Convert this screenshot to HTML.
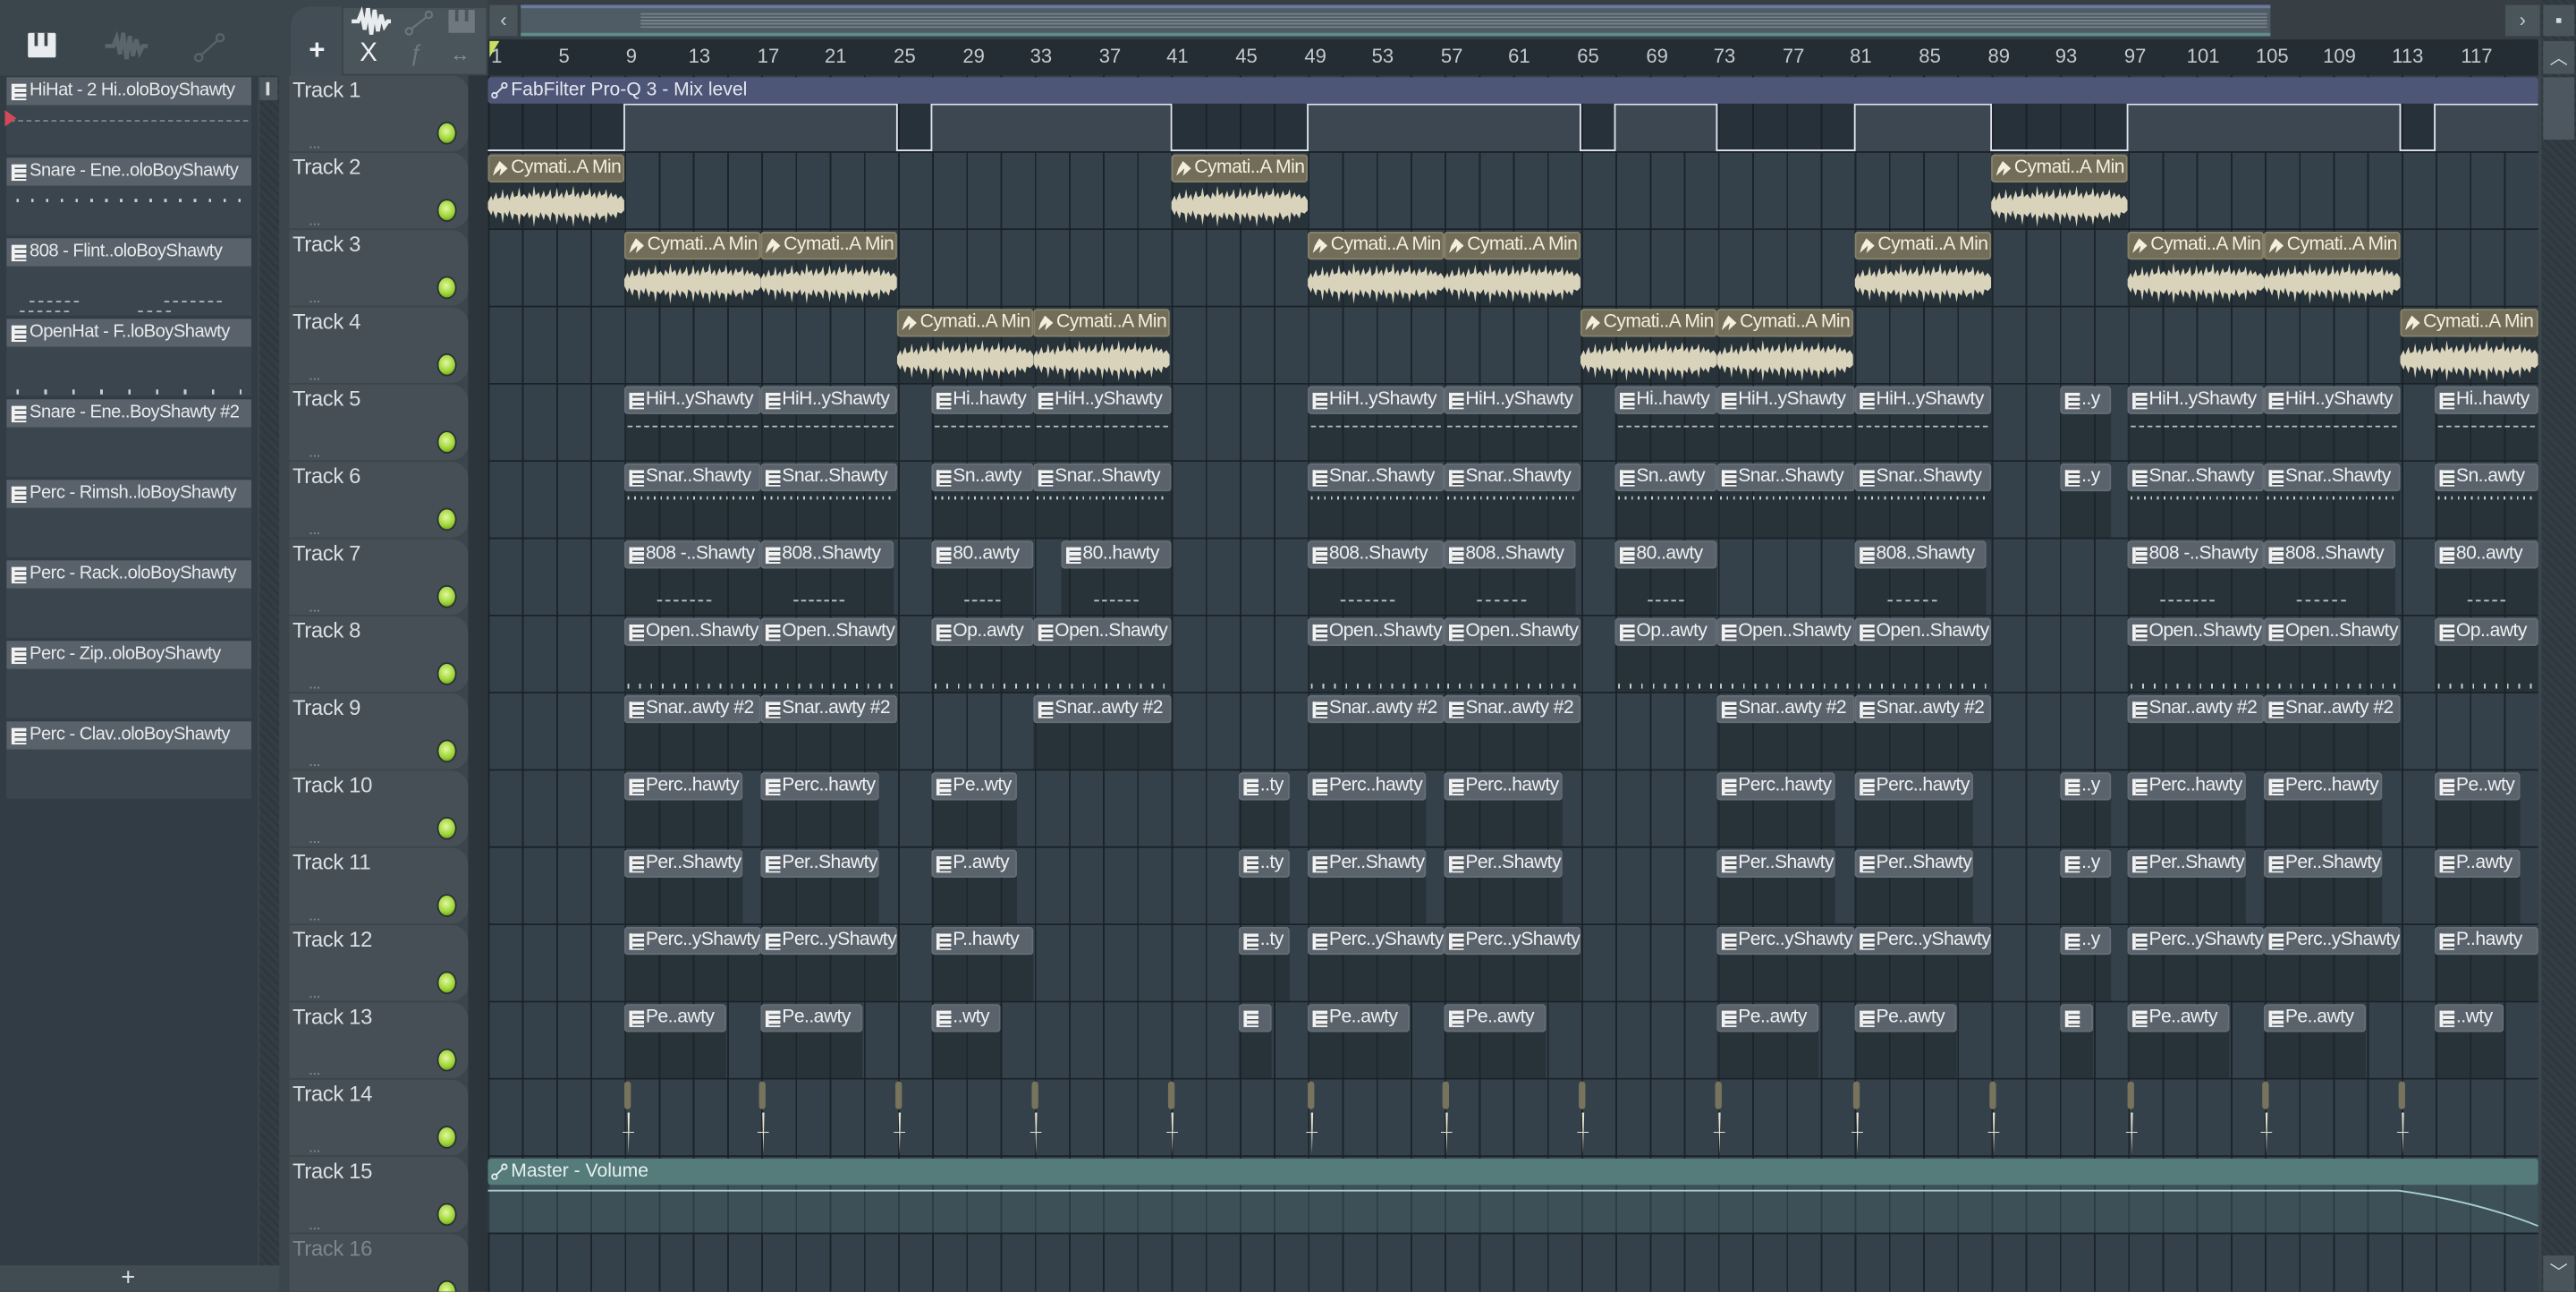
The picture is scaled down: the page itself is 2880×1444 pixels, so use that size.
<!DOCTYPE html>
<html><head><meta charset="utf-8"><style>
*{margin:0;padding:0;box-sizing:border-box}
html,body{width:2880px;height:1444px;overflow:hidden;background:#3b454c}
#s{position:absolute;left:0;top:0;width:1568px;height:786px;transform:scale(1.836735);transform-origin:0 0;font-family:"Liberation Sans",sans-serif;background:#3b454c;overflow:hidden}
.ab{position:absolute}
.lp{position:absolute;left:0;top:46px;width:157px;height:724px;background:#323c44}
.it{position:absolute;left:4px;width:149px;height:47px;background:#3b454d}
.it .l{height:17px;background:#59626a;color:#e6eaed;font-size:11px;line-height:17px;padding-left:14px;white-space:nowrap;overflow:hidden;position:relative;letter-spacing:-.3px}
.it .l::before,.p .h::before{content:"";position:absolute;left:3px;top:4px;width:7px;height:10px;background:repeating-linear-gradient(180deg,#f2f2f2 0 2px,#4a5359 2px 3px);border-left:2px solid #f2f2f2}
.it .b{position:absolute;left:2px;right:2px;top:26px;height:1px;border-top:1px dashed #9aa3a9;opacity:.7}
.th{position:absolute;left:176px;width:109px;height:46px;background:#474f56;border-radius:0 10px 10px 0;color:#d8dee2;font-size:13px;padding:1px 0 0 2px;letter-spacing:-.2px}
.th i{position:absolute;left:91px;top:29px;width:10px;height:12px;border-radius:50%;background:radial-gradient(circle at 45% 40%,#e4f7a0,#97d22e 60%,#4f7a10);box-shadow:0 0 0 1px #2a3036}
.th b{position:absolute;left:12px;top:36px;font-size:9px;color:#8d969c;font-weight:normal}
#grid{position:absolute;left:297px;top:46px;width:1248px;height:740px;background-color:#34414b;background-image:repeating-linear-gradient(90deg,#1c2429 0 1px,transparent 1px 20.8px)}
.row{position:absolute;left:297px;width:1248px;height:47px;box-shadow:inset 0 -1px 0 #1b2227}
.c{position:absolute;top:1px;height:45px;background:rgba(30,38,44,.55)}
.h{position:relative;height:17px;border-radius:2px;font-size:11.5px;line-height:17px;white-space:nowrap;overflow:hidden;letter-spacing:-.3px}
.p .h{background:#5a636b;color:#eef1f3;padding-left:13px;box-shadow:inset 0 0 0 1px #646d75}
.a .h{background:#716d58;color:#f3efdc;padding-left:14px;box-shadow:inset 0 0 0 1px #858169}
.a .h::before{content:"";position:absolute;left:3px;top:4px;width:9px;height:9px;background:#f3efdc;clip-path:polygon(0 0,55% 50%,0 100%,15% 50%,45% 0,100% 50%,45% 100%,55% 50%)}
.a svg{position:absolute;left:0;top:17px;width:100%;height:28px}
.p .d{position:absolute;left:2px;right:2px;height:1px}
.ruler{position:absolute;left:297px;top:24px;width:1248px;height:22px;background:#242d33}
.ruler span{position:absolute;top:3px;font-size:12px;color:#c3cad0}
.m{position:absolute;top:1px;width:4px;height:17px;background:#77735c;border-radius:2px}
</style></head><body><div id="s">
<svg width="0" height="0" style="position:absolute"><defs><symbol id="wf" viewBox="0 0 83 28" preserveAspectRatio="none"><polygon fill="#d9d3bb" points="0,12 2,8 3,11 5,6 6,10 8,9 9,4 10,10 12,7 13,11 15,5 16,9 18,8 19,3 20,9 22,7 24,10 25,6 27,9 28,2 29,8 31,6 32,10 34,5 35,9 37,7 38,4 39,10 41,8 42,3 43,9 45,6 46,10 48,4 49,8 51,7 52,2 53,9 55,6 56,10 58,5 59,8 61,7 62,3 63,9 65,6 66,10 68,5 69,8 71,7 72,4 73,10 75,6 76,9 78,7 79,10 81,8 83,11 83,17 81,19 79,18 78,22 76,19 75,21 73,18 72,25 71,20 69,21 68,23 66,18 65,22 63,20 62,26 61,21 59,20 58,24 56,18 55,22 53,19 52,27 51,21 49,20 48,24 46,18 45,22 43,19 42,26 41,20 39,18 38,24 37,21 35,19 34,23 32,18 31,22 29,20 28,27 27,19 25,22 24,18 22,21 20,19 19,26 18,20 16,19 15,23 13,17 12,21 10,18 9,25 8,19 6,18 5,22 3,17 2,20 0,16"/></symbol>
<symbol id="sp" viewBox="0 0 8 45"><path d="M3,19 L3.6,44 L4.3,19 Z" fill="#e8e4d0"/><path d="M0,31 H7" stroke="#e8e4d0" stroke-width=".6"/></symbol></defs></svg>

<div class="ab" style="left:0;top:0;width:176px;height:46px;background:#3b454c"></div>
<div class="ab" style="left:17px;top:20px;width:17px;height:15px;background:#e8ecee;border-radius:1px"><div class="ab" style="left:4px;top:0;width:2px;height:8px;background:#3b454c"></div><div class="ab" style="left:10px;top:0;width:2px;height:8px;background:#3b454c"></div></div>
<svg class="ab" style="left:64px;top:18px" width="26" height="20" viewBox="0 0 26 20"><path d="M0,10 H5 L7,5 L9,15 L11,2 L13,18 L15,4 L17,16 L19,6 L21,14 L23,10 H26" stroke="#5a646b" stroke-width="2.5" fill="none"/></svg>
<svg class="ab" style="left:118px;top:20px" width="20" height="18"><circle cx="3" cy="15" r="2.2" stroke="#58626a" fill="none" stroke-width="1.3"/><circle cx="16" cy="3" r="2.2" stroke="#58626a" fill="none" stroke-width="1.3"/><path d="M5,13 L14,5" stroke="#58626a" stroke-width="1.3"/></svg>

<div class="lp"></div>
<div class="ab" style="left:158px;top:46px;width:12px;height:724px;background:repeating-linear-gradient(45deg,#2f383f 0 2px,#343d44 2px 4px)"></div>
<div class="ab" style="left:158px;top:47px;width:11px;height:14px;background:#4b545b"><div class="ab" style="left:4px;top:3px;width:2px;height:8px;background:#d5dadd"></div></div>
<div class="it" style="top:47px"><div class="l">HiHat - 2 Hi..oloBoyShawty</div><div class="b"></div><div class="ab" style="left:-1px;top:20px;width:0;height:0;border-top:5px solid transparent;border-bottom:5px solid transparent;border-left:7px solid #d24a5a"></div></div>
<div class="it" style="top:96px"><div class="l">Snare - Ene..oloBoyShawty</div><div class="ab" style="left:6px;right:6px;top:25px;height:2px;background:repeating-linear-gradient(90deg,#c8ced2 0 1.5px,transparent 1.5px 9px)"></div></div>
<div class="it" style="top:145px"><div class="l">808 - Flint..oloBoyShawty</div><div class="ab" style="left:14px;top:38px;width:30px;border-top:1px dashed #aab1b6"></div><div class="ab" style="left:96px;top:38px;width:35px;border-top:1px dashed #aab1b6"></div><div class="ab" style="left:8px;top:44px;width:30px;border-top:1px dashed #aab1b6"></div><div class="ab" style="left:80px;top:44px;width:20px;border-top:1px dashed #aab1b6"></div></div>
<div class="it" style="top:194px"><div class="l">OpenHat - F..loBoyShawty</div><div class="ab" style="left:6px;right:6px;top:43px;height:3px;background:repeating-linear-gradient(90deg,#c8ced2 0 1.5px,transparent 1.5px 17px)"></div></div>
<div class="it" style="top:243px"><div class="l">Snare - Ene..BoyShawty #2</div></div>
<div class="it" style="top:292px"><div class="l">Perc - Rimsh..loBoyShawty</div></div>
<div class="it" style="top:341px"><div class="l">Perc - Rack..oloBoyShawty</div></div>
<div class="it" style="top:390px"><div class="l">Perc - Zip..oloBoyShawty</div></div>
<div class="it" style="top:439px"><div class="l">Perc - Clav..oloBoyShawty</div></div>
<div class="ab" style="left:0;top:770px;width:176px;height:16px;background:#414b52;color:#d8dde0;font-size:15px;line-height:16px;text-align:center;padding-right:20px">+</div>
<div class="ab" style="left:170px;top:46px;width:6px;height:740px;background:#3b454c"></div>

<div class="ab" style="left:177px;top:4px;width:120px;height:42px;background:#434d55;border-radius:12px 0 0 0"></div>
<div class="ab" style="left:208px;top:4px;width:89px;height:42px;background:#4a545b;box-shadow:inset 0 0 0 1px #3a4349"></div>
<div class="ab" style="left:188px;top:21px;color:#eef1f3;font-size:17px;font-weight:bold">+</div>
<svg class="ab" style="left:214px;top:4px" width="24" height="18"><path d="M0,9 H4 L6,4 L8,14 L10,1 L12,17 L14,2 L16,15 L18,5 L20,12 L22,9 H24" stroke="#e8ecee" stroke-width="2.4" fill="none"/></svg>
<svg class="ab" style="left:246px;top:6px" width="18" height="16"><circle cx="3" cy="13" r="2" stroke="#6a747b" fill="none" stroke-width="1.2"/><circle cx="15" cy="3" r="2" stroke="#6a747b" fill="none" stroke-width="1.2"/><path d="M4.5,11.5 L13.5,4.5" stroke="#6a747b" stroke-width="1.2"/></svg>
<div class="ab" style="left:273px;top:6px;width:16px;height:14px;background:#6f787e"><div class="ab" style="left:4px;top:0;width:2px;height:7px;background:#4a545b"></div><div class="ab" style="left:10px;top:0;width:2px;height:7px;background:#4a545b"></div></div>
<div class="ab" style="left:219px;top:24px;color:#eef1f3;font-size:16px">X</div>
<div class="ab" style="left:249px;top:24px;color:#6f787e;font-size:14px;font-style:italic">ƒ</div>
<div class="ab" style="left:274px;top:26px;color:#8a9399;font-size:12px">↔</div>

<div class="ab" style="left:297px;top:0;width:1271px;height:24px;background:#373f45"></div>
<div class="ab" style="left:298px;top:3px;width:17px;height:19px;background:#4a545b;color:#c7cdd1;font-size:12px;text-align:center;line-height:19px">‹</div>
<div class="ab" style="left:317px;top:3px;width:1065px;height:19px;background:#505c65;border-top:2px solid #6c7aa0;border-bottom:2px solid #5f8c8c"></div>
<div class="ab" style="left:390px;top:8px;width:990px;height:9px;background:repeating-linear-gradient(180deg,#8f9aa2 0 1px,transparent 1px 2px);opacity:.6"></div>
<div class="ab" style="left:1525px;top:3px;width:21px;height:19px;background:#4a545b;color:#c7cdd1;font-size:12px;text-align:center;line-height:19px">›</div>

<div class="ab" style="left:1547px;top:0;width:21px;height:786px;background:repeating-linear-gradient(45deg,#2f383f 0 2px,#343d44 2px 4px)"></div>
<div class="ab" style="left:1548px;top:3px;width:19px;height:19px;background:#4a545b"><div class="ab" style="left:8px;top:8px;width:3px;height:3px;background:#d5dadd"></div></div>
<div class="ab" style="left:1548px;top:25px;width:19px;height:20px;background:#4a545b;color:#cfd4d8;font-size:11px;text-align:center;line-height:22px">︿</div>
<div class="ab" style="left:1548px;top:47px;width:19px;height:38px;background:#4d575f"></div>
<div class="ab" style="left:1548px;top:764px;width:19px;height:22px;background:#4a545b;color:#cfd4d8;font-size:11px;text-align:center;line-height:22px">﹀</div>

<div class="ruler">
<div class="ab" style="left:1px;top:1px;width:0;height:0;border-left:6px solid #c8e060;border-bottom:10px solid transparent"></div>
<span style="left:2px">1</span><span style="left:43px">5</span><span style="left:84px">9</span><span style="left:122px">13</span><span style="left:164px">17</span><span style="left:205px">21</span><span style="left:247px">25</span><span style="left:289px">29</span><span style="left:330px">33</span><span style="left:372px">37</span><span style="left:413px">41</span><span style="left:455px">45</span><span style="left:497px">49</span><span style="left:538px">53</span><span style="left:580px">57</span><span style="left:621px">61</span><span style="left:663px">65</span><span style="left:705px">69</span><span style="left:746px">73</span><span style="left:788px">77</span><span style="left:829px">81</span><span style="left:871px">85</span><span style="left:913px">89</span><span style="left:954px">93</span><span style="left:996px">97</span><span style="left:1034px">101</span><span style="left:1076px">105</span><span style="left:1117px">109</span><span style="left:1159px">113</span><span style="left:1201px">117</span>
</div>

<div class="ab" style="left:285px;top:46px;width:12px;height:740px;background:#2c353b"></div>
<div class="th" style="top:46px">Track 1<i></i><b>...</b></div>
<div class="th" style="top:93px">Track 2<i></i><b>...</b></div>
<div class="th" style="top:140px">Track 3<i></i><b>...</b></div>
<div class="th" style="top:187px">Track 4<i></i><b>...</b></div>
<div class="th" style="top:234px">Track 5<i></i><b>...</b></div>
<div class="th" style="top:281px">Track 6<i></i><b>...</b></div>
<div class="th" style="top:328px">Track 7<i></i><b>...</b></div>
<div class="th" style="top:375px">Track 8<i></i><b>...</b></div>
<div class="th" style="top:422px">Track 9<i></i><b>...</b></div>
<div class="th" style="top:469px">Track 10<i></i><b>...</b></div>
<div class="th" style="top:516px">Track 11<i></i><b>...</b></div>
<div class="th" style="top:563px">Track 12<i></i><b>...</b></div>
<div class="th" style="top:610px">Track 13<i></i><b>...</b></div>
<div class="th" style="top:657px">Track 14<i></i><b>...</b></div>
<div class="th" style="top:704px">Track 15<i></i><b>...</b></div>
<div class="th" style="top:751px;color:#7d868c">Track 16<i></i></div>

<div id="grid"></div>

<div class="row" style="top:46px">
<div class="ab" style="left:0;top:17px;width:1248px;height:29px;background:rgba(25,32,38,.45)"></div>
<svg class="ab" style="left:0;top:0" width="1248" height="47"><path d="M83,46 V18 H249 V46 Z M270,46 V18 H416 V46 Z M499,46 V18 H665 V46 Z M686,46 V18 H748 V46 Z M832,46 V18 H915 V46 Z M998,46 V18 H1164 V46 Z M1185,46 V18 H1248 V46 Z" fill="#3d4752"/><path d="M0,45.5 H83 V17.5 H249 V45.5 H270 V17.5 H416 V45.5 H499 V17.5 H665 V45.5 H686 V17.5 H748 V45.5 H832 V17.5 H915 V45.5 H998 V17.5 H1164 V45.5 H1185 V17.5 H1248" stroke="#dfe4f0" stroke-width="1" fill="none"/></svg>
<div class="ab" style="left:0;top:1px;width:1248px;height:16px;background:#4e5677;border-radius:2px;color:#e4e7f0;font-size:11.5px;line-height:16px;padding-left:14px">FabFilter Pro-Q 3 - Mix level</div>
<svg class="ab" style="left:2px;top:4px" width="10" height="10"><circle cx="2" cy="8" r="1.5" stroke="#e4e7f0" fill="none"/><circle cx="8" cy="2" r="1.5" stroke="#e4e7f0" fill="none"/><path d="M3,7 L7,3" stroke="#e4e7f0"/></svg>
</div>

<div class="row" style="top:93px">
<div class="c a" style="left:0;width:83px"><div class="h">Cymati..A Min</div><svg><use href="#wf"/></svg></div>
<div class="c a" style="left:416px;width:83px"><div class="h">Cymati..A Min</div><svg><use href="#wf"/></svg></div>
<div class="c a" style="left:915px;width:83px"><div class="h">Cymati..A Min</div><svg><use href="#wf"/></svg></div>
</div>
<div class="row" style="top:140px">
<div class="c a" style="left:83px;width:83px"><div class="h">Cymati..A Min</div><svg><use href="#wf"/></svg></div>
<div class="c a" style="left:166px;width:83px"><div class="h">Cymati..A Min</div><svg><use href="#wf"/></svg></div>
<div class="c a" style="left:499px;width:83px"><div class="h">Cymati..A Min</div><svg><use href="#wf"/></svg></div>
<div class="c a" style="left:582px;width:83px"><div class="h">Cymati..A Min</div><svg><use href="#wf"/></svg></div>
<div class="c a" style="left:832px;width:83px"><div class="h">Cymati..A Min</div><svg><use href="#wf"/></svg></div>
<div class="c a" style="left:998px;width:83px"><div class="h">Cymati..A Min</div><svg><use href="#wf"/></svg></div>
<div class="c a" style="left:1081px;width:83px"><div class="h">Cymati..A Min</div><svg><use href="#wf"/></svg></div>
</div>
<div class="row" style="top:187px">
<div class="c a" style="left:249px;width:83px"><div class="h">Cymati..A Min</div><svg><use href="#wf"/></svg></div>
<div class="c a" style="left:332px;width:83px"><div class="h">Cymati..A Min</div><svg><use href="#wf"/></svg></div>
<div class="c a" style="left:665px;width:83px"><div class="h">Cymati..A Min</div><svg><use href="#wf"/></svg></div>
<div class="c a" style="left:748px;width:83px"><div class="h">Cymati..A Min</div><svg><use href="#wf"/></svg></div>
<div class="c a" style="left:1164px;width:84px"><div class="h">Cymati..A Min</div><svg><use href="#wf"/></svg></div>
</div>
<div class="row" style="top:234px">
<div class="c p" style="left:83px;width:83px"><div class="h">HiH..yShawty</div><div class="d" style="top:24px;border-top:1px dashed #b8bfc4"></div></div>
<div class="c p" style="left:166px;width:83px"><div class="h">HiH..yShawty</div><div class="d" style="top:24px;border-top:1px dashed #b8bfc4"></div></div>
<div class="c p" style="left:270px;width:62px"><div class="h">Hi..hawty</div><div class="d" style="top:24px;border-top:1px dashed #b8bfc4"></div></div>
<div class="c p" style="left:332px;width:84px"><div class="h">HiH..yShawty</div><div class="d" style="top:24px;border-top:1px dashed #b8bfc4"></div></div>
<div class="c p" style="left:499px;width:83px"><div class="h">HiH..yShawty</div><div class="d" style="top:24px;border-top:1px dashed #b8bfc4"></div></div>
<div class="c p" style="left:582px;width:83px"><div class="h">HiH..yShawty</div><div class="d" style="top:24px;border-top:1px dashed #b8bfc4"></div></div>
<div class="c p" style="left:686px;width:62px"><div class="h">Hi..hawty</div><div class="d" style="top:24px;border-top:1px dashed #b8bfc4"></div></div>
<div class="c p" style="left:748px;width:84px"><div class="h">HiH..yShawty</div><div class="d" style="top:24px;border-top:1px dashed #b8bfc4"></div></div>
<div class="c p" style="left:832px;width:83px"><div class="h">HiH..yShawty</div><div class="d" style="top:24px;border-top:1px dashed #b8bfc4"></div></div>
<div class="c p" style="left:957px;width:31px"><div class="h">..y</div></div>
<div class="c p" style="left:998px;width:83px"><div class="h">HiH..yShawty</div><div class="d" style="top:24px;border-top:1px dashed #b8bfc4"></div></div>
<div class="c p" style="left:1081px;width:83px"><div class="h">HiH..yShawty</div><div class="d" style="top:24px;border-top:1px dashed #b8bfc4"></div></div>
<div class="c p" style="left:1185px;width:63px"><div class="h">Hi..hawty</div><div class="d" style="top:24px;border-top:1px dashed #b8bfc4"></div></div>
</div>
<div class="row" style="top:281px">
<div class="c p" style="left:83px;width:83px"><div class="h">Snar..Shawty</div><div class="d" style="top:20px;height:2px;background:repeating-linear-gradient(90deg,#c8ced2 0 1px,transparent 1px 4px)"></div></div>
<div class="c p" style="left:166px;width:83px"><div class="h">Snar..Shawty</div><div class="d" style="top:20px;height:2px;background:repeating-linear-gradient(90deg,#c8ced2 0 1px,transparent 1px 4px)"></div></div>
<div class="c p" style="left:270px;width:62px"><div class="h">Sn..awty</div><div class="d" style="top:20px;height:2px;background:repeating-linear-gradient(90deg,#c8ced2 0 1px,transparent 1px 4px)"></div></div>
<div class="c p" style="left:332px;width:84px"><div class="h">Snar..Shawty</div><div class="d" style="top:20px;height:2px;background:repeating-linear-gradient(90deg,#c8ced2 0 1px,transparent 1px 4px)"></div></div>
<div class="c p" style="left:499px;width:83px"><div class="h">Snar..Shawty</div><div class="d" style="top:20px;height:2px;background:repeating-linear-gradient(90deg,#c8ced2 0 1px,transparent 1px 4px)"></div></div>
<div class="c p" style="left:582px;width:83px"><div class="h">Snar..Shawty</div><div class="d" style="top:20px;height:2px;background:repeating-linear-gradient(90deg,#c8ced2 0 1px,transparent 1px 4px)"></div></div>
<div class="c p" style="left:686px;width:62px"><div class="h">Sn..awty</div><div class="d" style="top:20px;height:2px;background:repeating-linear-gradient(90deg,#c8ced2 0 1px,transparent 1px 4px)"></div></div>
<div class="c p" style="left:748px;width:84px"><div class="h">Snar..Shawty</div><div class="d" style="top:20px;height:2px;background:repeating-linear-gradient(90deg,#c8ced2 0 1px,transparent 1px 4px)"></div></div>
<div class="c p" style="left:832px;width:83px"><div class="h">Snar..Shawty</div><div class="d" style="top:20px;height:2px;background:repeating-linear-gradient(90deg,#c8ced2 0 1px,transparent 1px 4px)"></div></div>
<div class="c p" style="left:957px;width:31px"><div class="h">..y</div></div>
<div class="c p" style="left:998px;width:83px"><div class="h">Snar..Shawty</div><div class="d" style="top:20px;height:2px;background:repeating-linear-gradient(90deg,#c8ced2 0 1px,transparent 1px 4px)"></div></div>
<div class="c p" style="left:1081px;width:83px"><div class="h">Snar..Shawty</div><div class="d" style="top:20px;height:2px;background:repeating-linear-gradient(90deg,#c8ced2 0 1px,transparent 1px 4px)"></div></div>
<div class="c p" style="left:1185px;width:63px"><div class="h">Sn..awty</div><div class="d" style="top:20px;height:2px;background:repeating-linear-gradient(90deg,#c8ced2 0 1px,transparent 1px 4px)"></div></div>
</div>
<div class="row" style="top:328px">
<div class="c p" style="left:83px;width:83px"><div class="h">808 -..Shawty</div><div class="d" style="top:36px;border-top:1px dashed #b8bfc4;left:20px;right:30px"></div></div>
<div class="c p" style="left:166px;width:81px"><div class="h">808..Shawty</div><div class="d" style="top:36px;border-top:1px dashed #b8bfc4;left:20px;right:30px"></div></div>
<div class="c p" style="left:270px;width:62px"><div class="h">80..awty</div><div class="d" style="top:36px;border-top:1px dashed #b8bfc4;left:20px;right:20px"></div></div>
<div class="c p" style="left:349px;width:67px"><div class="h">80..hawty</div><div class="d" style="top:36px;border-top:1px dashed #b8bfc4;left:20px;right:20px"></div></div>
<div class="c p" style="left:499px;width:83px"><div class="h">808..Shawty</div><div class="d" style="top:36px;border-top:1px dashed #b8bfc4;left:20px;right:30px"></div></div>
<div class="c p" style="left:582px;width:80px"><div class="h">808..Shawty</div><div class="d" style="top:36px;border-top:1px dashed #b8bfc4;left:20px;right:30px"></div></div>
<div class="c p" style="left:686px;width:62px"><div class="h">80..awty</div><div class="d" style="top:36px;border-top:1px dashed #b8bfc4;left:20px;right:20px"></div></div>
<div class="c p" style="left:832px;width:80px"><div class="h">808..Shawty</div><div class="d" style="top:36px;border-top:1px dashed #b8bfc4;left:20px;right:30px"></div></div>
<div class="c p" style="left:998px;width:83px"><div class="h">808 -..Shawty</div><div class="d" style="top:36px;border-top:1px dashed #b8bfc4;left:20px;right:30px"></div></div>
<div class="c p" style="left:1081px;width:80px"><div class="h">808..Shawty</div><div class="d" style="top:36px;border-top:1px dashed #b8bfc4;left:20px;right:30px"></div></div>
<div class="c p" style="left:1185px;width:63px"><div class="h">80..awty</div><div class="d" style="top:36px;border-top:1px dashed #b8bfc4;left:20px;right:20px"></div></div>
</div>
<div class="row" style="top:375px">
<div class="c p" style="left:83px;width:83px"><div class="h">Open..Shawty</div><div class="d" style="top:40px;height:3px;background:repeating-linear-gradient(90deg,#c8ced2 0 1px,transparent 1px 7px)"></div></div>
<div class="c p" style="left:166px;width:83px"><div class="h">Open..Shawty</div><div class="d" style="top:40px;height:3px;background:repeating-linear-gradient(90deg,#c8ced2 0 1px,transparent 1px 7px)"></div></div>
<div class="c p" style="left:270px;width:62px"><div class="h">Op..awty</div><div class="d" style="top:40px;height:3px;background:repeating-linear-gradient(90deg,#c8ced2 0 1px,transparent 1px 7px)"></div></div>
<div class="c p" style="left:332px;width:84px"><div class="h">Open..Shawty</div><div class="d" style="top:40px;height:3px;background:repeating-linear-gradient(90deg,#c8ced2 0 1px,transparent 1px 7px)"></div></div>
<div class="c p" style="left:499px;width:83px"><div class="h">Open..Shawty</div><div class="d" style="top:40px;height:3px;background:repeating-linear-gradient(90deg,#c8ced2 0 1px,transparent 1px 7px)"></div></div>
<div class="c p" style="left:582px;width:83px"><div class="h">Open..Shawty</div><div class="d" style="top:40px;height:3px;background:repeating-linear-gradient(90deg,#c8ced2 0 1px,transparent 1px 7px)"></div></div>
<div class="c p" style="left:686px;width:62px"><div class="h">Op..awty</div><div class="d" style="top:40px;height:3px;background:repeating-linear-gradient(90deg,#c8ced2 0 1px,transparent 1px 7px)"></div></div>
<div class="c p" style="left:748px;width:84px"><div class="h">Open..Shawty</div><div class="d" style="top:40px;height:3px;background:repeating-linear-gradient(90deg,#c8ced2 0 1px,transparent 1px 7px)"></div></div>
<div class="c p" style="left:832px;width:83px"><div class="h">Open..Shawty</div><div class="d" style="top:40px;height:3px;background:repeating-linear-gradient(90deg,#c8ced2 0 1px,transparent 1px 7px)"></div></div>
<div class="c p" style="left:998px;width:83px"><div class="h">Open..Shawty</div><div class="d" style="top:40px;height:3px;background:repeating-linear-gradient(90deg,#c8ced2 0 1px,transparent 1px 7px)"></div></div>
<div class="c p" style="left:1081px;width:83px"><div class="h">Open..Shawty</div><div class="d" style="top:40px;height:3px;background:repeating-linear-gradient(90deg,#c8ced2 0 1px,transparent 1px 7px)"></div></div>
<div class="c p" style="left:1185px;width:63px"><div class="h">Op..awty</div><div class="d" style="top:40px;height:3px;background:repeating-linear-gradient(90deg,#c8ced2 0 1px,transparent 1px 7px)"></div></div>
</div>
<div class="row" style="top:422px">
<div class="c p" style="left:83px;width:83px"><div class="h">Snar..awty #2</div></div>
<div class="c p" style="left:166px;width:83px"><div class="h">Snar..awty #2</div></div>
<div class="c p" style="left:332px;width:84px"><div class="h">Snar..awty #2</div></div>
<div class="c p" style="left:499px;width:83px"><div class="h">Snar..awty #2</div></div>
<div class="c p" style="left:582px;width:83px"><div class="h">Snar..awty #2</div></div>
<div class="c p" style="left:748px;width:84px"><div class="h">Snar..awty #2</div></div>
<div class="c p" style="left:832px;width:83px"><div class="h">Snar..awty #2</div></div>
<div class="c p" style="left:998px;width:83px"><div class="h">Snar..awty #2</div></div>
<div class="c p" style="left:1081px;width:83px"><div class="h">Snar..awty #2</div></div>
</div>
<div class="row" style="top:469px">
<div class="c p" style="left:83px;width:72px"><div class="h">Perc..hawty</div></div>
<div class="c p" style="left:166px;width:72px"><div class="h">Perc..hawty</div></div>
<div class="c p" style="left:270px;width:52px"><div class="h">Pe..wty</div></div>
<div class="c p" style="left:457px;width:31px"><div class="h">..ty</div></div>
<div class="c p" style="left:499px;width:72px"><div class="h">Perc..hawty</div></div>
<div class="c p" style="left:582px;width:72px"><div class="h">Perc..hawty</div></div>
<div class="c p" style="left:748px;width:72px"><div class="h">Perc..hawty</div></div>
<div class="c p" style="left:832px;width:72px"><div class="h">Perc..hawty</div></div>
<div class="c p" style="left:957px;width:31px"><div class="h">..y</div></div>
<div class="c p" style="left:998px;width:72px"><div class="h">Perc..hawty</div></div>
<div class="c p" style="left:1081px;width:72px"><div class="h">Perc..hawty</div></div>
<div class="c p" style="left:1185px;width:52px"><div class="h">Pe..wty</div></div>
</div>
<div class="row" style="top:516px">
<div class="c p" style="left:83px;width:72px"><div class="h">Per..Shawty</div></div>
<div class="c p" style="left:166px;width:72px"><div class="h">Per..Shawty</div></div>
<div class="c p" style="left:270px;width:52px"><div class="h">P..awty</div></div>
<div class="c p" style="left:457px;width:31px"><div class="h">..ty</div></div>
<div class="c p" style="left:499px;width:72px"><div class="h">Per..Shawty</div></div>
<div class="c p" style="left:582px;width:72px"><div class="h">Per..Shawty</div></div>
<div class="c p" style="left:748px;width:72px"><div class="h">Per..Shawty</div></div>
<div class="c p" style="left:832px;width:72px"><div class="h">Per..Shawty</div></div>
<div class="c p" style="left:957px;width:31px"><div class="h">..y</div></div>
<div class="c p" style="left:998px;width:72px"><div class="h">Per..Shawty</div></div>
<div class="c p" style="left:1081px;width:72px"><div class="h">Per..Shawty</div></div>
<div class="c p" style="left:1185px;width:52px"><div class="h">P..awty</div></div>
</div>
<div class="row" style="top:563px">
<div class="c p" style="left:83px;width:83px"><div class="h">Perc..yShawty</div></div>
<div class="c p" style="left:166px;width:83px"><div class="h">Perc..yShawty</div></div>
<div class="c p" style="left:270px;width:62px"><div class="h">P..hawty</div></div>
<div class="c p" style="left:457px;width:31px"><div class="h">..ty</div></div>
<div class="c p" style="left:499px;width:83px"><div class="h">Perc..yShawty</div></div>
<div class="c p" style="left:582px;width:83px"><div class="h">Perc..yShawty</div></div>
<div class="c p" style="left:748px;width:84px"><div class="h">Perc..yShawty</div></div>
<div class="c p" style="left:832px;width:83px"><div class="h">Perc..yShawty</div></div>
<div class="c p" style="left:957px;width:31px"><div class="h">..y</div></div>
<div class="c p" style="left:998px;width:83px"><div class="h">Perc..yShawty</div></div>
<div class="c p" style="left:1081px;width:83px"><div class="h">Perc..yShawty</div></div>
<div class="c p" style="left:1185px;width:63px"><div class="h">P..hawty</div></div>
</div>
<div class="row" style="top:610px">
<div class="c p" style="left:83px;width:62px"><div class="h">Pe..awty</div></div>
<div class="c p" style="left:166px;width:62px"><div class="h">Pe..awty</div></div>
<div class="c p" style="left:270px;width:42px"><div class="h">..wty</div></div>
<div class="c p" style="left:457px;width:20px"><div class="h"></div></div>
<div class="c p" style="left:499px;width:62px"><div class="h">Pe..awty</div></div>
<div class="c p" style="left:582px;width:62px"><div class="h">Pe..awty</div></div>
<div class="c p" style="left:748px;width:62px"><div class="h">Pe..awty</div></div>
<div class="c p" style="left:832px;width:62px"><div class="h">Pe..awty</div></div>
<div class="c p" style="left:957px;width:20px"><div class="h"></div></div>
<div class="c p" style="left:998px;width:62px"><div class="h">Pe..awty</div></div>
<div class="c p" style="left:1081px;width:62px"><div class="h">Pe..awty</div></div>
<div class="c p" style="left:1185px;width:42px"><div class="h">..wty</div></div>
</div>
<div class="row" style="top:657px">
<div class="m" style="left:83px"></div><svg class="ab" style="left:82px;top:1px" width="8" height="45"><use href="#sp"/></svg>
<div class="m" style="left:165px"></div><svg class="ab" style="left:164px;top:1px" width="8" height="45"><use href="#sp"/></svg>
<div class="m" style="left:248px"></div><svg class="ab" style="left:247px;top:1px" width="8" height="45"><use href="#sp"/></svg>
<div class="m" style="left:331px"></div><svg class="ab" style="left:330px;top:1px" width="8" height="45"><use href="#sp"/></svg>
<div class="m" style="left:414px"></div><svg class="ab" style="left:413px;top:1px" width="8" height="45"><use href="#sp"/></svg>
<div class="m" style="left:499px"></div><svg class="ab" style="left:498px;top:1px" width="8" height="45"><use href="#sp"/></svg>
<div class="m" style="left:581px"></div><svg class="ab" style="left:580px;top:1px" width="8" height="45"><use href="#sp"/></svg>
<div class="m" style="left:664px"></div><svg class="ab" style="left:663px;top:1px" width="8" height="45"><use href="#sp"/></svg>
<div class="m" style="left:747px"></div><svg class="ab" style="left:746px;top:1px" width="8" height="45"><use href="#sp"/></svg>
<div class="m" style="left:831px"></div><svg class="ab" style="left:830px;top:1px" width="8" height="45"><use href="#sp"/></svg>
<div class="m" style="left:914px"></div><svg class="ab" style="left:913px;top:1px" width="8" height="45"><use href="#sp"/></svg>
<div class="m" style="left:998px"></div><svg class="ab" style="left:997px;top:1px" width="8" height="45"><use href="#sp"/></svg>
<div class="m" style="left:1080px"></div><svg class="ab" style="left:1079px;top:1px" width="8" height="45"><use href="#sp"/></svg>
<div class="m" style="left:1163px"></div><svg class="ab" style="left:1162px;top:1px" width="8" height="45"><use href="#sp"/></svg>
</div>
<div class="row" style="top:704px">
<div class="ab" style="left:0;top:1px;width:1248px;height:45px;background:rgba(80,110,115,.35)"></div>
<div class="ab" style="left:0;top:1px;width:1248px;height:16px;background:#557b7b;border-radius:2px;color:#e6f0ef;font-size:11.5px;line-height:16px;padding-left:14px">Master - Volume</div>
<svg class="ab" style="left:2px;top:4px" width="10" height="10"><circle cx="2" cy="8" r="1.5" stroke="#e6f0ef" fill="none"/><circle cx="8" cy="2" r="1.5" stroke="#e6f0ef" fill="none"/><path d="M3,7 L7,3" stroke="#e6f0ef"/></svg>
<svg class="ab" style="left:0;top:0" width="1248" height="47"><path d="M0,20.5 H1163 Q1210,27 1248,42" stroke="#a9d0d0" stroke-width="1" fill="none"/></svg>
</div>
</div></body></html>
